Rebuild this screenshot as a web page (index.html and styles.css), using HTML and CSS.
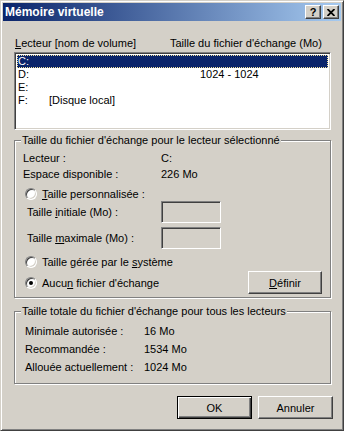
FILE: index.html
```html
<!DOCTYPE html>
<html lang="fr">
<head>
  <meta charset="UTF-8" />
  <title>Mémoire virtuelle</title>
  <link rel="stylesheet" href="styles.css">
</head>
<body>

  <div class="window">
    <div class="titlebar">
      <span class="title">Mémoire virtuelle</span>
      <div class="caption-buttons">
        <span class="cap-btn">?</span>
        <span class="cap-btn">
          <svg width="8" height="7" viewBox="0 0 8 7"><path d="M0.5 0 L7.5 7 M7.5 0 L0.5 7" stroke="#000" stroke-width="1.8"/></svg>
        </span>
      </div>
    </div>

    <div class="content">
      <div class="list-head">
        <span class="head-drive"><u>L</u>ecteur [nom de volume]</span>
        <span>Taille du fichier d'échange (Mo)</span>
      </div>
      <div class="listbox">
        <div class="row selected"><span>C:</span><span></span><span></span></div>
        <div class="row"><span>D:</span><span></span><span>1024 - 1024</span></div>
        <div class="row"><span>E:</span><span></span><span></span></div>
        <div class="row"><span>F:</span><span>[Disque local]</span><span></span></div>
      </div>

      <div class="group group-drive">
        <div class="group-title">Taille du fichier d'échange pour le lecteur sélectionné</div>
        <div class="info-grid">
          <span>Lecteur :</span><span>C:</span>
          <span>Espace disponible :</span><span>226 Mo</span>
        </div>
        <div class="radio-row first"><span class="radio"></span><span><u>T</u>aille personnalisée :</span></div>
        <div class="size-row"><span class="size-label">Taille <u>i</u>nitiale (Mo) :</span><span class="field"></span></div>
        <div class="size-row second"><span class="size-label">Taille <u>m</u>aximale (Mo) :</span><span class="field"></span></div>
        <div class="radio-row system"><span class="radio"></span><span>Taille gérée par le <u>s</u>ystème</span></div>
        <div class="radio-row none">
          <span class="radio checked"></span><span>Aucu<u>n</u> fichier d'échange</span>
          <span class="btn btn-set"><span><u>D</u>éfinir</span></span>
        </div>
      </div>

      <div class="group group-total">
        <div class="group-title">Taille totale du fichier d'échange pour tous les lecteurs</div>
        <div class="stats-grid">
          <span>Minimale autorisée :</span><span>16 Mo</span>
          <span>Recommandée :</span><span>1534 Mo</span>
          <span>Allouée actuellement :</span><span>1024 Mo</span>
        </div>
      </div>

      <div class="dialog-buttons">
        <span class="btn btn-default">OK</span>
        <span class="btn">Annuler</span>
      </div>
    </div>
  </div>

</body>
</html>
```

FILE: styles.css
```css
body {
  margin: 0;
  font-family: 'Liberation Sans', Arial, sans-serif;
  font-size: 11px;
  color: #000;
  background-color: #d4d0c8;
}

u {
  text-decoration: underline;
  text-underline-offset: 1px;
}

.window {
  width: 344px;
  height: 431px;
  box-sizing: border-box;
  padding: 2px;
  background-color: #d4d0c8;
  border: 1px solid;
  border-color: #d4d0c8 #404040 #404040 #d4d0c8;
  box-shadow: inset 1px 1px #fff, inset -1px -1px #808080;
}

/* title bar */

.titlebar {
  height: 18px;
  display: flex;
  align-items: center;
  justify-content: space-between;
  padding: 0 2px;
  background: linear-gradient(to right, #0a246a, #a6caf0);
}

.title {
  color: #fff;
  font-weight: bold;
  font-size: 12px;
  line-height: 18px;
}

.caption-buttons {
  display: flex;
  gap: 2px;
}

.cap-btn {
  width: 16px;
  height: 14px;
  box-sizing: border-box;
  display: flex;
  align-items: center;
  justify-content: center;
  background-color: #d4d0c8;
  border: 1px solid;
  border-color: #fff #404040 #404040 #fff;
  box-shadow: inset -1px -1px #808080;
  font-weight: bold;
  font-size: 11px;
  line-height: 12px;
}

/* content */

.content {
  padding: 0 10px 0 11px;
}

.list-head {
  display: flex;
  margin-top: 16px;
  padding-left: 1px;
  line-height: 13px;
}

.head-drive {
  width: 155px;
}

.listbox {
  margin-top: 2px;
  height: 78px;
  box-sizing: border-box;
  background-color: #fff;
  border: 1px solid;
  border-color: #808080 #fff #fff #808080;
  box-shadow: inset 1px 1px #404040, inset -1px -1px #d4d0c8;
  padding: 2px;
}

.row {
  display: grid;
  grid-template-columns: 31px 151px 1fr;
  height: 13px;
  line-height: 13px;
  padding-left: 1px;
}

.row.selected {
  background-color: #0a246a;
  color: #fff;
  outline: 1px dotted #f3e29b;
  outline-offset: -1px;
}

/* group boxes */

.group {
  border: 1px solid #808080;
  box-shadow: inset 1px 1px #fff, 1px 1px #fff;
  padding: 0 8px;
}

.group-title {
  display: table;
  margin: -7px 0 0 -2px;
  padding: 0 1px;
  line-height: 13px;
  background-color: #d4d0c8;
}

.group-drive {
  margin-top: 10px;
  padding-bottom: 3px;
}

.info-grid {
  display: grid;
  grid-template-columns: 138px 1fr;
  grid-auto-rows: 16px;
  align-items: center;
  margin-top: 3px;
}

.radio-row {
  display: flex;
  align-items: center;
  height: 14px;
  padding-left: 2px;
}

.radio-row.first {
  margin-top: 5px;
}

.radio-row.system {
  margin-top: 6px;
}

.radio-row.none {
  margin-top: 2px;
  height: 23px;
}

.radio {
  position: relative;
  width: 12px;
  height: 12px;
  box-sizing: border-box;
  margin-right: 5px;
  border-radius: 50%;
  border: 1px solid;
  border-color: #808080 #fff #fff #808080;
  box-shadow: inset 1px 1px #404040, inset -1px -1px #d4d0c8;
  background-color: #fff;
}

.radio.checked::after {
  content: "";
  position: absolute;
  left: 3px;
  top: 3px;
  width: 4px;
  height: 4px;
  border-radius: 50%;
  background-color: #000;
}

.size-row {
  display: flex;
  align-items: center;
  height: 22px;
  padding-left: 4px;
}

.size-row.second {
  margin-top: 4px;
}

.size-label {
  width: 134px;
}

.field {
  width: 60px;
  height: 22px;
  box-sizing: border-box;
  border: 1px solid;
  border-color: #808080 #fff #fff #808080;
  box-shadow: inset 1px 1px #404040, inset -1px -1px #d4d0c8;
}

.btn {
  width: 75px;
  height: 23px;
  box-sizing: border-box;
  display: flex;
  align-items: center;
  justify-content: center;
  background-color: #d4d0c8;
  border: 1px solid;
  border-color: #fff #404040 #404040 #fff;
  box-shadow: inset -1px -1px #808080;
}

.btn-set {
  margin-left: auto;
  width: 74px;
}

.btn-default {
  border-color: #000;
  box-shadow: inset 1px 1px #fff, inset -1px -1px #404040, inset -2px -2px #808080;
}

.group-total {
  margin-top: 13px;
  padding-bottom: 7px;
}

.stats-grid {
  display: grid;
  grid-template-columns: 119px 1fr;
  grid-auto-rows: 18px;
  align-items: center;
  margin-top: 4px;
  padding-left: 2px;
}

.dialog-buttons {
  display: flex;
  justify-content: flex-end;
  gap: 6px;
  margin-top: 12px;
  margin-right: -2px;
}
```
